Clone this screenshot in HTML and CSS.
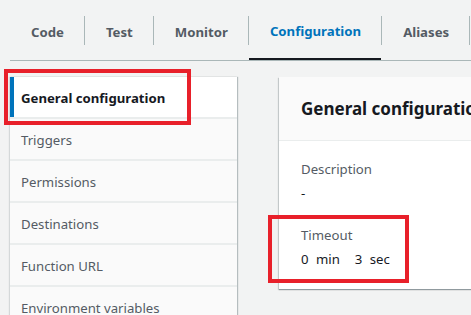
FILE: index.html
```html
<!DOCTYPE html>
<html lang="en">
<head>
    <meta charset="UTF-8">
    <meta name="viewport" content="width=device-width, initial-scale=1.0">
    <title>Lambda configuration</title>
    <link rel="stylesheet" href="styles.css">
</head>
<body>
    <nav class="tabs">
        <a class="tab">Code</a>
        <span class="tab-sep"></span>
        <a class="tab">Test</a>
        <span class="tab-sep"></span>
        <a class="tab">Monitor</a>
        <span class="tab-sep"></span>
        <a class="tab active">Configuration</a>
        <span class="tab-sep"></span>
        <a class="tab">Aliases</a>
        <span class="tab-sep"></span>
    </nav>

    <div class="main">
        <ul class="side-nav">
            <li class="selected">General configuration</li>
            <li>Triggers</li>
            <li>Permissions</li>
            <li>Destinations</li>
            <li>Function URL</li>
            <li>Environment variables</li>
        </ul>

        <section class="panel">
            <header class="panel-header">
                <h2>General configuration</h2>
            </header>
            <div class="panel-body">
                <div class="field">
                    <div class="field-label">Description</div>
                    <div class="field-value">-</div>
                </div>
                <div class="field">
                    <div class="field-label">Timeout</div>
                    <div class="field-value duration">0 min &nbsp;3 sec</div>
                </div>
            </div>
        </section>
    </div>

    <!-- annotation boxes -->
    <div class="mark mark-nav"></div>
    <div class="mark mark-timeout"></div>
</body>
</html>
```

FILE: styles.css
```css
body { margin: 0; background: #f2f3f3; font-family: "Noto Sans", "Open Sans", sans-serif; color: #16191f; overflow: hidden; }

.tabs { display: flex; align-items: center; margin-left: 10px; height: 60px; border-bottom: 1px solid #aab7b8; }
.tab { display: flex; align-items: center; height: 60px; box-sizing: border-box; padding: 3px 20px 0 21px; font-size: 13.2px; font-weight: 700; color: #545b64; white-space: nowrap; }
.tab.active { color: #0073bb; border-bottom: 2px solid #16191f; }
.tab-sep { width: 1px; height: 29px; background: #aab7b8; flex: none; }

.main { display: flex; gap: 42px; margin: 16px 0 0 10px; align-items: flex-start; }

.side-nav { list-style: none; margin: 0; padding: 0; width: 227px; flex: none; background: #fafafa; box-shadow: 1px 0 1px rgba(0, 28, 36, 0.25), -1px 0 1px rgba(0, 28, 36, 0.12); }
.side-nav li { border-bottom: 2px solid #eaeded; padding: 1px 0 0 11px; box-sizing: border-box; height: 42px; display: flex; align-items: center; font-size: 13.2px; color: #545b64; }
.side-nav li.selected { background: #fff; color: #16191f; font-weight: 700; box-shadow: inset 4px 0 0 #0073bb; }

.panel { flex: none; width: 260px; background: #fff; box-shadow: 0 1px 1px rgba(0, 28, 36, 0.3), -1px 1px 1px rgba(0, 28, 36, 0.15); }
.panel-header { height: 63px; background: #fafafa; border-bottom: 1px solid #eaeded; display: flex; align-items: center; padding-left: 22px; overflow: hidden; }
.panel-header h2 { margin: 0; font-size: 17px; font-weight: 700; white-space: nowrap; }
.panel-body { padding: 17px 22px 19px; display: grid; gap: 20px; }
.field-label { font-size: 13.2px; line-height: 22px; color: #545b64; }
.field-value { font-size: 13.2px; line-height: 22px; margin-top: 2px; white-space: nowrap; }
.duration { word-spacing: 4px; }

.mark { position: absolute; border: 4px solid #e8202a; box-sizing: border-box; }
.mark-nav { left: 4px; top: 69px; width: 187px; height: 56px; }
.mark-timeout { left: 268px; top: 215px; width: 141px; height: 68px; }
```
